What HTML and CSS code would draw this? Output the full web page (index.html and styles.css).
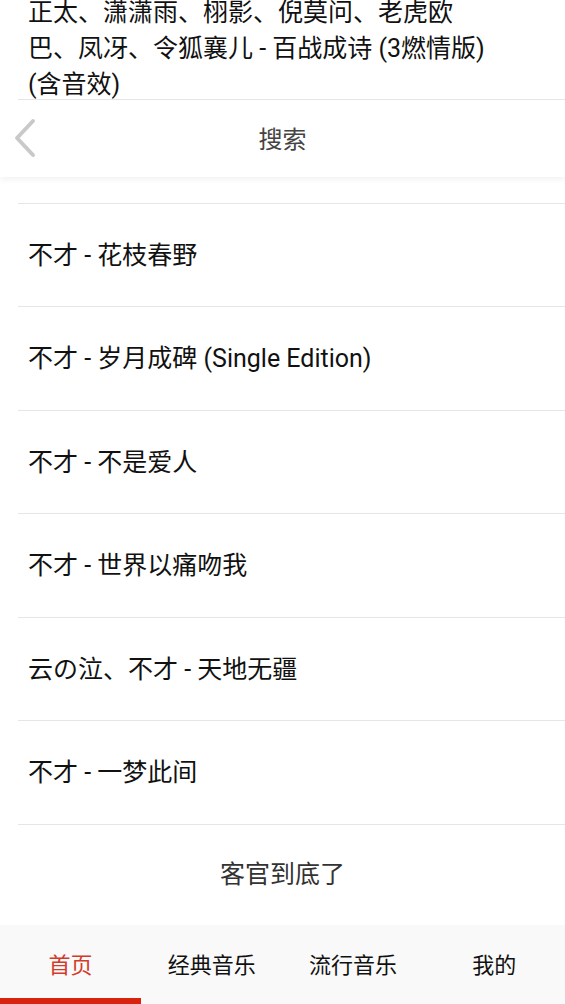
FILE: index.html
```html
<!DOCTYPE html>
<html lang="zh-CN">
<head>
    <meta charset="UTF-8">
    <meta name="viewport" content="width=device-width, initial-scale=1.0">
    <title>搜索</title>
    <link rel="stylesheet" href="styles.css">
</head>
<body>
    <div class="screen">
        <ul class="song-list">
            <li class="song-item">正太、潇潇雨、栩影、倪莫问、老虎欧巴、凤冴、令狐襄儿 - 百战成诗 (3燃情版) (含音效)</li>
            <li class="song-item">不才 - 百战成诗</li>
            <li class="song-item">不才 - 花枝春野</li>
            <li class="song-item">不才 - 岁月成碑 (Single Edition)</li>
            <li class="song-item">不才 - 不是爱人</li>
            <li class="song-item">不才 - 世界以痛吻我</li>
            <li class="song-item">云の泣、不才 - 天地无疆</li>
            <li class="song-item">不才 - 一梦此间</li>
        </ul>
        <div class="list-end">客官到底了</div>

        <!-- header sits over the scrolled list -->
        <header class="top-bar">
            <a class="back-btn" href="#">
                <svg width="30" height="40" viewBox="0 0 30 40">
                    <polyline points="22,3 6,20 22,37" fill="none" stroke="#c9c9c9" stroke-width="4" stroke-linecap="round" stroke-linejoin="round"/>
                </svg>
            </a>
            <div class="top-title">搜索</div>
        </header>

        <nav class="tab-bar">
            <a class="tab active" href="#">首页</a>
            <a class="tab" href="#">经典音乐</a>
            <a class="tab" href="#">流行音乐</a>
            <a class="tab" href="#">我的</a>
        </nav>
    </div>
</body>
</html>
```

FILE: styles.css
```css
body {
    margin: 0;
    padding: 0;
    background-color: #fff;
    font-family: Roboto, "Noto Sans CJK SC", sans-serif;
}

.screen {
    position: relative;
    width: 565px;
    height: 1004px;
    overflow: hidden;
    background-color: #fff;
}

.song-list {
    list-style: none;
    margin: -3.5px 0 0 18px;
    padding: 0;
}

.song-item {
    display: flex;
    align-items: center;
    box-sizing: border-box;
    height: 103.5px;
    padding: 2px 72px 0 10px;
    border-bottom: 1px solid #e6e6e6;
    font-size: 25px;
    line-height: 36px;
    color: #111;
}

.list-end {
    height: 101px;
    line-height: 99px;
    text-align: center;
    font-size: 25px;
    color: #333;
}

.top-bar {
    position: absolute;
    top: 101px;
    left: 0;
    right: 0;
    height: 76px;
    box-sizing: border-box;
    padding-bottom: 3px;
    display: flex;
    align-items: center;
    justify-content: center;
    background-color: #fff;
    box-shadow: 0 3px 6px rgba(0, 0, 0, 0.05);
}

.back-btn {
    position: absolute;
    left: 11px;
    top: 17px;
    display: block;
    width: 30px;
    height: 40px;
}

.back-btn svg {
    display: block;
}

.top-title {
    font-size: 24px;
    color: #444;
}

.tab-bar {
    position: absolute;
    left: 0;
    right: 0;
    bottom: 0;
    height: 79px;
    display: flex;
    background-color: #f9f9f9;
}

.tab {
    flex: 1;
    display: flex;
    align-items: center;
    justify-content: center;
    box-sizing: border-box;
    padding-bottom: 3px;
    font-size: 22px;
    color: #111;
    text-decoration: none;
}

.tab.active {
    color: #d43a2a;
    border-bottom: 6px solid #d9230f;
    padding: 3px 0 0;
}
```
